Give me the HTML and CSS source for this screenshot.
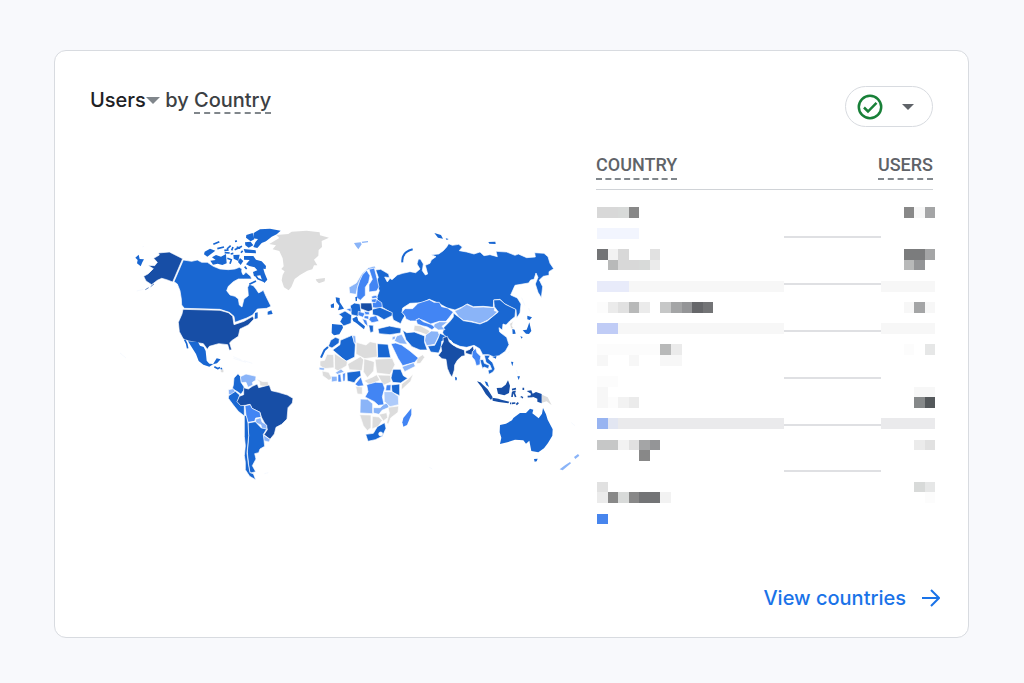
FILE: index.html
```
<!DOCTYPE html>
<html lang="en">
<head>
<meta charset="utf-8">
<meta name="viewport" content="width=device-width, initial-scale=1">
<title>Users by Country</title>
<link rel="stylesheet" href="styles.css">
</head>
<body>
<main class="card">
  <header class="card-header">
    <h1 class="title"><button class="metric" type="button">Users<svg class="caret" viewBox="0 0 14 8" aria-hidden="true"><path d="M0 0h14L7 7z"/></svg></button> by <span class="dimension">Country</span></h1>
    <button class="status" type="button" aria-label="Data quality">
      <svg class="status-check" viewBox="0 0 26 26" aria-hidden="true"><circle cx="13" cy="13" r="11.2"/><path d="M7 13.500l4 4 8.500-8.700"/></svg>
      <svg class="status-caret" viewBox="0 0 14 8" aria-hidden="true"><path d="M1 1h12L7 7z"/></svg>
    </button>
  </header>

  <div class="content">
    <svg class="map" viewBox="90 220 494 270" role="img" aria-label="World map of users by country">
      <!-- North America -->
      <g transform="translate(120 220) scale(.33333)">
        <path class="c2" d="M190 123L215 127 232 123 245 130 262 130 280 142 300 150 325 152 345 150 358 145 366 150 364 160 370 168 378 160 392 172 395 180 370 180 355 180 340 188 325 202 320 215 330 228 345 232 355 240 358 258 366 264 372 240 385 230 383 205 388 196 400 200 408 210 416 222 430 214 438 232 446 248 453 262 440 268 412 270 398 288 380 297 345 310 342 292 328 280 300 271 193 268 185 258 184 240 180 215 172 195 162 188Z"/>
        <path class="c1" d="M189 271L300 274 325 281 338 292 342 317 372 307 398 292 402 300 385 318 360 330 355 352 335 365 329 372 335 392 328 394 323 377 296 374 268 382 262 391 250 374 238 372 206 366 190 360 178 338 175 310 186 285Z"/>
        <path class="c1" d="M188 119L148 99 115 102 118 108 101 118 112 130 104 140 84 139 100 149 85 164 71 172 78 186 95 197 112 184 125 178 140 182 158 189Z"/>
        <path class="c2 isle" d="M46 116L56 107 59 120 72 121 67 130 62 142 51 133 53 123ZM204 367L234 369 240 380 251 384 257 396 260 425 268 434 280 435 268 443 250 437 236 426 228 405ZM279 436L290 418 302 421 291 433Z"/>
        <path class="line2" d="M194 362L200 374 203 388M283 443L294 449 300 445M303 447L307 454"/>
        <path class="c2 isle" d="M372 111L400 111 408 122 425 127 438 141 437 150 430 149 434 163 442 182 433 192 425 180 421 169 402 172 399 159 412 154 404 145 388 141 378 136 389 123 372 122ZM401 42L420 31 450 29 482 35 470 46 455 53 438 67 425 72 412 87 400 84 406 70 414 60 400 58Z"/>
        <path class="c2 isle" d="M276 115L288 108 303 113 318 105 320 133 307 138 293 134 279 137 271 125 287 123ZM254 98L270 89 286 95 273 105 262 113 252 106ZM340 108L359 107 355 126 341 119ZM360 117L370 126 362 138 354 129ZM379 48L398 42 403 61 392 67 378 56ZM375 70L392 68 400 79 386 86 376 79ZM371 90L407 94 408 103 375 101ZM443 278L454 274 458 285 443 287ZM405 282L413 280 413 298 404 300ZM349 163L362 151 366 166Z"/>
        <path class="line2" d="M280 76L298 68M292 89L312 84M321 90L332 80M335 94L339 84M345 67L351 66M344 92L366 82M350 84L361 88M314 101L329 102M313 94L326 93M363 101L368 95M374 143L380 150M332 105L340 103M404 166L414 179 432 187M322 118L334 122 330 134M388 196L408 186"/>
        <path class="line1 fine" d="M76 212L86 206M92 203L102 195"/>
        <path class="faint" d="M0 402L18 417M50 216L70 211M67 84L72 82M340 418L378 430"/>
        <path class="c0" d="M300 455L310 449 312 458 306 462Z"/>
      </g>
      <!-- Greenland and Iceland -->
      <g transform="translate(220 220) scale(.33333)">
        <path class="c0 isle" d="M148 75L178 57 169 48 205 45 215 38 260 35 299 40 300 49 327 56 305 66 306 84 296 93 295 110 282 122 292 139 282 139 277 151 262 155 240 168 224 180 214 204 206 214 192 205 185 184 188 168 194 157 184 150 191 142 188 118 178 96 158 91 168 79ZM287 181L297 179 315 177 314 187 297 193 290 187Z"/>
      </g>
      <!-- South America -->
      <g transform="translate(170 350) scale(.33333)">
        <path class="c2" d="M204 74L192 87 190 108 187 119 204 129 213 136 225 118 214 101 212 83Z"/>
        <path class="c4" d="M211 83L228 75 258 82 257 94 247 100 249 108 234 115 228 100 214 101Z"/>
        <path class="c0" d="M259 89L269 99 270 110 297 114 294 98 278 98Z"/>
        <path class="c4" d="M175 122L190 119 196 128 184 140 176 136Z"/>
        <path class="c2" d="M176 140L196 127 209 138 204 155 223 170 223 201 205 187 190 168 175 148Z"/>
        <path class="c1" d="M221 116L235 120 247 112 262 105 266 116 298 108 304 125 325 130 352 138 369 148 367 162 354 176 351 210 335 226 318 235 313 255 300 271 282 257 292 242 288 230 274 204 270 190 246 178 240 166 226 169 212 170 201 158 208 142 221 137Z"/>
        <path class="c3" d="M225 170L241 167 246 178 270 190 273 205 257 207 254 217 234 220 228 200Z"/>
        <path class="c4" d="M257 211L272 206 276 219 290 228 291 242 275 239 273 228 257 221ZM281 258L301 272 296 279 281 275Z"/>
        <path class="c2" d="M234 222L256 218 274 237 290 240 280 256 284 292 270 300 266 311 254 314 258 330 247 350 257 368 240 373 236 350 232 310 236 260Z"/>
        <path class="c2" d="M223 199L229 200 234 222 236 260 231 312 235 345 240 371 250 374 257 392 239 382 226 362 226 340 223 320 226 290 223 262Z"/>
        <path class="faint" d="M190 23L214 33M222 35L247 43M283 374L295 371"/>
      </g>
      <!-- Russia, Central and East Asia -->
      <g transform="translate(400 225) scale(.33333)">
        <path class="c2" d="M-73 138L-58 136-34 150-32 161-46 159-38 174-30 163-24 167-8 153 8 148 30 143 47 146 60 135 51 120 55 106 61 105 70 120 67 140 76 153 83 150 76 124 90 118 94 108 108 98 94 92 116 90 130 80 140 69 146 59 157 64 176 61 187 69 178 80 200 84 222 90 240 84 252 95 270 92 292 98 288 82 320 84 345 94 355 90 380 101 406 99 404 86 432 88 444 98 450 118 461 134 447 143 447 154 430 157 418 168 428 188 424 221 414 205 406 180 414 160 408 147 402 166 392 168 386 177 345 184 332 213 352 222 363 240 360 267 350 282 348 257 330 248 312 238 300 226 281 228 280 250 250 247 220 248 202 240 188 248 165 258 142 252 116 238 88 226 66 236 30 238 8 252 6 265 15 275 8 286 2 299-20 288-26 266-60 246-70 221-62 200-73 175-65 160Z"/>
        <path class="line2 thick" d="M7 115C5 95 15 82 38 76"/>
        <path class="c2 isle" d="M103 27L123 33 129 44 114 41ZM137 43L146 45 140 48ZM265 54L286 53 287 60 268 59Z"/>
        <path class="c3" d="M6 265L15 254 38 254 54 238 88 227 102 235 118 235 125 248 142 252 160 264 148 280 138 292 118 292 92 300 72 290 55 284 50 291 31 291 18 285 15 276Z"/>
        <path class="c4" d="M164 261L182 253 200 241 220 250 250 249 284 251 283 260 293 263 279 276 262 289 240 299 214 292 190 289 176 278Z"/>
        <path class="c2" d="M160 267L176 279 190 290 214 294 240 300 262 291 280 276 295 264 283 248 281 228 300 227 316 241 347 256 345 278 330 290 318 303 309 300 307 318 297 311 299 324 320 340 327 362 316 382 297 395 280 398 265 392 248 392 239 374 222 364 200 370 180 367 160 358 145 344 135 340 128 326 132 310 150 292 160 279Z"/>
        <path class="c3" d="M48 287L58 284 70 293 92 301 106 308 96 317 82 309 66 305 52 300Z"/>
        <path class="c4" d="M103 300L119 293 143 294 126 307 135 317 115 318 101 308Z"/>
        <path class="c0" d="M43 304L62 305 90 321 82 333 60 325 41 320Z"/>
        <path class="c2" d="M8 318L20 326 43 324 74 336 74 356 82 378 60 378 36 368 18 347Z"/>
        <path class="c4" d="M77 333L94 321 114 322 118 333 104 361 80 365 74 350Z"/>
        <path class="c2" d="M120 328L136 335 136 348 125 352 124 367 116 387 92 384 83 366 104 364 114 344Z"/>
        <path class="c0" d="M329 299L340 292 336 305 341 313 333 315Z"/>
        <path class="c2 isle" d="M337 315L344 317 347 329 338 330ZM382 275L396 280 389 288 382 286ZM388 295L394 321 387 330 378 329 368 319 380 317 384 307ZM361 337L368 339 365 344Z"/>
        <path class="faint" d="M365 221L375 245M386 252L389 262"/>
      </g>
      <!-- South Asia and Oceania -->
      <g transform="translate(420 320) scale(.33333)">
        <path class="c1" d="M55 109L65 96 63 82 70 68 69 56 82 52 88 69 95 75 110 85 133 93 135 110 125 112 112 124 104 138 103 153 96 175 89 164 82 148 78 121 66 119ZM137 96L150 91 159 81 162 93 155 108 148 106 137 103Z"/>
        <path class="border" d="M91 64L100 77 122 87 134 90 145 87"/>
        <path class="c3" d="M157 98L167 88 171 101 182 112 180 137 169 140 164 123 156 114Z"/>
        <path class="c2" d="M180 122L190 122 193 133 208 139 205 149 192 144 188 149 184 138ZM193 109L211 109 205 119 218 131 225 150 219 159 207 166 204 154 215 151 210 138 198 130Z"/>
        <path class="c2 isle" d="M194 187L202 190 207 204 199 199ZM105 173L111 176 110 184 106 184ZM217 114L229 111 228 119ZM273 128L280 129 277 142ZM292 172L300 172 296 183Z"/>
        <path class="c1 isle" d="M171 187L181 190 203 211 218 235 213 243 197 225 185 205ZM217 236L235 239 244 242 268 248 265 253 236 249 218 245ZM230 207L245 206 257 197 264 184 270 200 267 222 253 229 234 224ZM320 216L334 214 338 224 348 219 365 225 365 253 352 248 352 239 340 234 331 232 333 224Z"/>
        <path class="line1" d="M276 212L288 209M277 220L287 217M278 220L276 234M282 221L287 234M310 206L310 213M323 233L338 232M276 253L286 252M289 257L295 251M302 233L309 236M270 253L274 253"/>
        <path class="c0 isle" d="M366 227L383 235 395 259 380 247 366 251Z"/>
        <path class="c2 isle" d="M240 318L258 314 276 304 280 297 300 282 318 282 330 269 340 272 337 283 356 298 366 284 369 267 378 286 383 302 398 331 397 350 384 372 372 388 355 400 334 396 330 376 328 365 318 374 310 364 285 362 262 370 240 375 244 356 239 340ZM342 420L353 419 350 427 344 428Z"/>
        <path class="c4 isle" d="M419 451L436 438 450 429 453 433 428 454ZM462 414L474 405 478 410 466 420Z"/>
        <path class="faint" d="M454 311L465 320M28 445L37 450M263 103L269 97M289 153L294 165M297 236L305 236"/>
      </g>
      <!-- Europe -->
      <g transform="translate(310 230) scale(.33333)">
        <path class="c4" d="M117 175L139 162 155 135 175 116 194 111 197 118 170 123 156 142 149 158 144 170 138 196 119 193Z"/>
        <path class="c4 isle" d="M132 42L152 40 155 46 145 61 138 52ZM155 38L174 36 174 40 157 42Z"/>
        <path class="c3" d="M142 177L149 155 157 138 170 124 180 140 176 160 166 175 166 199 151 214 140 206ZM177 121L193 117 201 148 207 174 200 186 177 189 177 167 187 151ZM187 223L200 211 215 221 217 233 209 238 188 236ZM180 264L199 260 207 277 186 281 177 272Z"/>
        <path class="c2 isle" d="M77 205L89 207 89 219 102 239 84 244 88 230 79 219ZM62 227L72 223 72 236 63 236ZM136 204L141 203 141 216 137 217ZM66 285L97 288 99 296 88 316 72 319 65 312ZM127 269L141 262 145 275 165 292 162 301 138 281 130 277Z"/>
        <path class="c2" d="M121 230L133 222 150 225 153 247 145 262 124 257ZM86 256L105 246 125 259 123 283 101 291 90 278 97 264ZM187 241L210 235 247 251 246 260 222 272 204 261 188 257ZM204 299L238 291 273 298 272 312 240 317 207 314ZM176 288L190 289 190 308 181 311Z"/>
        <path class="c1" d="M152 222L185 222 188 243 175 248 152 239Z"/>
        <path class="c3" d="M145 247L165 253 159 265 144 259ZM162 247L178 249 178 257 166 257ZM163 260L176 261 176 271 162 268ZM157 269L170 274 174 293 163 283ZM185 202L198 199 203 206 186 209ZM184 211L200 209 197 221 185 219ZM108 241L123 237 123 249Z"/>
      </g>
      <!-- Africa and the Middle East -->
      <g transform="translate(310 310) scale(.33333)">
        <path class="c2" d="M62 94L76 85 88 89 87 102 66 117 55 112ZM91 94L126 79 132 93 136 108 134 144 108 157 68 123 90 107ZM202 104L234 106 242 146 203 146Z"/>
        <path class="line2 thick" d="M54 114L43 124 33 146"/>
        <path class="c4" d="M128 79L137 81 138 104 132 101Z"/>
        <path class="c0" d="M139 100L168 108 180 98 199 102 202 144 164 149 138 135ZM30 156L44 154 51 136 71 137 72 176 43 179 30 170ZM73 133L112 158 110 170 84 186 74 180ZM113 165L151 143 161 152 156 185 118 182ZM162 149L193 158 191 186 172 206 160 188ZM195 151L247 148 255 167 240 197 200 192ZM162 215L188 204 200 197 210 214 178 227ZM203 198L242 199 243 219 220 229ZM275 225L297 208 310 194 302 217 274 243ZM137 232L157 234 157 256 142 255ZM36 186L56 190 66 208 57 214 38 200ZM234 295L266 291 264 310 242 327 235 346 230 342 238 312ZM149 317L183 318 183 356 172 365 160 350ZM187 322L206 324 217 334 205 352 186 360ZM207 316L230 311 233 326 220 336ZM321 148L338 137 344 145 331 163 320 164Z"/>
        <path class="c2" d="M111 190L151 185 153 200 140 210 133 221 112 216ZM249 181L272 181 280 200 293 208 272 222 248 220 243 207ZM244 228L269 225 269 260 246 249ZM167 376L190 373 202 353 224 341 228 358 217 382 196 392 174 397Z"/>
        <path class="c4" d="M64 202L81 202 82 216 65 219ZM28 175L44 177 42 184 27 182ZM76 191L93 180 103 189 82 196ZM151 270L173 271 188 284 188 314 150 312ZM190 296L211 296 221 286 232 282 237 295 216 304 207 316 190 312Z"/>
        <path class="c3" d="M84 196L92 196 94 219 84 219ZM98 194L106 191 105 216 99 217ZM135 226L153 204 161 230 144 232ZM229 228L243 227 242 245 227 245ZM170 227L196 220 218 221 224 238 217 263 222 287 205 289 193 278 165 264 174 248Z"/>
        <path class="c3 isle" d="M280 327L304 298 304 317 291 348 280 353 277 340Z"/>
        <path class="c5" d="M222 248L246 248 265 262 266 287 240 293 223 277Z"/>
        <path class="dot" d="M206 375a6 6 0 1 0 12 0a6 6 0 1 0-12 0"/>
        <path class="c3" d="M243 104L257 102 275 108 300 126 325 147 314 160 278 170 264 148Z"/>
        <path class="c4" d="M276 173L311 161 316 172 284 188ZM260 81L275 76 292 106 270 104 253 96ZM247 83L257 81 255 91 246 93Z"/>
      </g>
    </svg>

    <table class="countries">
      <thead>
        <tr><th scope="col"><span>COUNTRY</span></th><th scope="col" class="number"><span>USERS</span></th></tr>
      </thead>
      <tbody>
        <tr><td colspan="2">
          <svg class="redacted" viewBox="0 0 340 318" role="img" aria-label="Redacted country values">
            <g transform="translate(1 0) scale(10.57)">
              <path fill="#d8d8d8" d="M0 0h3v1H0zM2 4h1v1H2zM3 5h1v1H3zM2 5h1v1H2z"/>
              <path fill="#d8dad9" d="M3 0H2v1h1zM4 5h1v1H4zM30 26h1v1h-1zM2 27h1v1H2z"/>
              <path fill="#888" d="M3 0h1v1H3zM1 27h1v1H1zM3 27h1v1H3zM4 23h1v1H4zM29 0h1v1h-1z"/>
              <path fill="#f2f5fe" d="M0 2h4v1H0z"/>
              <path fill="#737476" d="M0 4h1v1H0zM10 9h1v1h-1zM4 27h2v1H4z"/>
              <path fill="#f2f2f2" d="M1 4h1v1H1zM2 22h1v1H2zM6 27h1v1H6zM2 18h1v1H2z"/>
              <path fill="#e1e1e1" d="M5 4h1v1H5zM2 9h1v1H2zM0 26h1v1H0zM31 22h1v1h-1zM3 22h1v1H3z"/>
              <path fill="#b8b9b9" d="M1 5h1v1H1zM3 9h1v1H3zM6 13h1v1H6zM29 5h1v1h-1z"/>
              <path fill="#ebebeb" d="M5 5h1v1H5zM1 9h1v1H1zM4 9h1v1H4zM3 18h1v1H3zM0 27h1v1H0zM7 13h1v1H7zM30 22h1v1h-1z"/>
              <path fill="#f7f7f7" d="M0 7h32v1H0zM0 11h32v1H0zM0 14h1v1H0zM3 14h1v1H3zM6 14h2v1H6zM0 18h1v1H0zM0 17h1v1H0zM30 17h2v1h-2zM30 0h1v1h-1zM29 9h1v1h-1zM31 9h1v1h-1z"/>
              <path fill="#fcfcfc" d="M0 9h1v1H0zM0 13h6v1H0zM29 13h1v1h-1zM0 16h2v1H0zM1 18h1v1H1zM31 27h1v1h-1z"/>
              <path fill="#e8ebfa" d="M0 7h3v1H0z"/><path fill="#c0ccf6" d="M0 11h2v1H0z"/>
              <path fill="#c6c7c7" d="M6 9h1v1H6zM0 22h2v1H0z"/>
              <path fill="#a4a5a6" d="M7 9h1v1H7zM4 22h1v1H4zM31 0h1v1h-1zM31 4h1v1h-1zM30 9h1v1h-1z"/>
              <path fill="#949597" d="M8 9h1v1H8zM5 22h1v1H5zM30 5h1v1h-1z"/>
              <path fill="#66676a" d="M9 9h1v1H9z"/><path fill="#7b7c7d" d="M29 4h2v1h-2z"/>
              <path fill="#e6e7e7" d="M31 13h1v1h-1zM31 26h1v1h-1z"/>
              <path fill="#eaeaec" d="M0 20h32v1H0z"/><path fill="#e2e6f2" d="M1 20h1v1H1z"/><path fill="#98b4f1" d="M0 20h1v1H0z"/>
              <path fill="#858889" d="M30 18h1v1h-1z"/><path fill="#54585b" d="M31 18h1v1h-1z"/>
              <path fill="#4785ed" d="M0 29h1v1H0z"/>
            </g>
            <path class="cover" d="M188 20h97v245h-97z"/>
            <path class="rules" d="M188 30h97M188 77h97M188 124h97M188 171h97M188 218h97M188 264h97"/>
          </svg>
        </td></tr>
      </tbody>
    </table>
  </div>

  <footer class="card-footer">
    <a class="view-link" href="#countries">View countries
      <svg viewBox="0 0 18 18" aria-hidden="true"><path d="M0 9h16.500M9 1l8 8-8 8"/></svg>
    </a>
  </footer>
</main>
</body>
</html>
```
FILE: styles.css
```
* {
  box-sizing: border-box;
}

body {
  margin: 0;
  min-height: 100vh;
  padding: 50px 55px 46px 54px;
  background: #f8f9fc;
  color: #3c4043;
  font-family: Inter, "Open Sans", sans-serif;
}

button {
  font: inherit;
  color: inherit;
  background: none;
  cursor: pointer;
}

.card {
  display: flex;
  flex-direction: column;
  padding: 35px 35px 25px;
  background: #fff;
  border: 1px solid #d8dbe0;
  border-radius: 12px;
}

.card-header {
  display: flex;
  justify-content: space-between;
  align-items: flex-start;
}

.title {
  margin: 0;
  font-size: 20px;
  font-weight: 500;
  line-height: 28px;
}

.metric {
  padding: 0;
  border: 0;
  color: #202124;
}

.caret {
  width: 14px;
  height: 8px;
  margin-bottom: 2px;
  fill: #80868b;
}

.dimension {
  border-bottom: 2px dashed #80868b;
}

.status {
  display: flex;
  align-items: center;
  gap: 18px;
  height: 41px;
  padding: 0 17px 0 11px;
  border: 1px solid #d8dbe0;
  border-radius: 21px;
}

.status-check {
  width: 26px;
  height: 26px;
  fill: none;
  stroke: #188038;
  stroke-width: 2.5;
}

.status-caret {
  width: 14px;
  height: 8px;
  fill: #5f6368;
}

.content {
  display: grid;
  grid-template-columns: 1fr 337px;
  column-gap: 12px;
  padding-top: 25px;
}

.map {
  width: 100%;
  margin-top: 67px;
}

.map path {
  stroke: #fff;
  stroke-width: 2;
  stroke-linejoin: round;
}

.map .c0 { fill: #dcdcdc; }
.map .c1 { fill: #174ea6; }
.map .c2 { fill: #1967d2; }
.map .c3 { fill: #4285f4; }
.map .c4 { fill: #8ab4f8; }
.map .c5 { fill: #aecbfa; }
.map .dot { fill: #fff; }

.map .isle {
  stroke: none;
}

.map .line2 {
  fill: none;
  stroke: #1967d2;
  stroke-width: 5;
}

.map .line1 {
  fill: none;
  stroke: #174ea6;
  stroke-width: 5;
}

.map .fine {
  stroke-width: 2;
}

.map .thick {
  stroke-width: 6;
}

.map .border {
  fill: none;
  stroke-width: 4;
}

.map .faint {
  fill: none;
  stroke: #f1f6fe;
  stroke-width: 2;
}

.countries {
  width: 100%;
  border-collapse: collapse;
  align-self: start;
}

.countries th {
  padding: 0 0 9px;
  border-bottom: 1px solid #d0d3d7;
  color: #5f6368;
  font: 500 18px/26px Roboto, sans-serif;
  text-align: left;
}

.countries th span {
  display: inline-block;
  border-bottom: 2px dashed #80868b;
}

.countries .number {
  text-align: right;
}

.countries td {
  padding: 17px 0 0;
}

.redacted {
  display: block;
  width: calc(100% + 3px);
  shape-rendering: crispEdges;
}

.cover {
  fill: #fff;
}

.rules {
  fill: none;
  stroke: #dfe0e3;
  stroke-width: 2;
}

.card-footer {
  display: flex;
  justify-content: flex-end;
  padding-top: 59px;
}

.view-link {
  display: flex;
  align-items: center;
  gap: 16px;
  margin-right: -7px;
  color: #1a73e8;
  font-size: 20px;
  font-weight: 500;
  line-height: 28px;
  text-decoration: none;
}

.view-link svg {
  width: 18px;
  height: 18px;
  fill: none;
  stroke: currentColor;
  stroke-width: 2;
}
```
